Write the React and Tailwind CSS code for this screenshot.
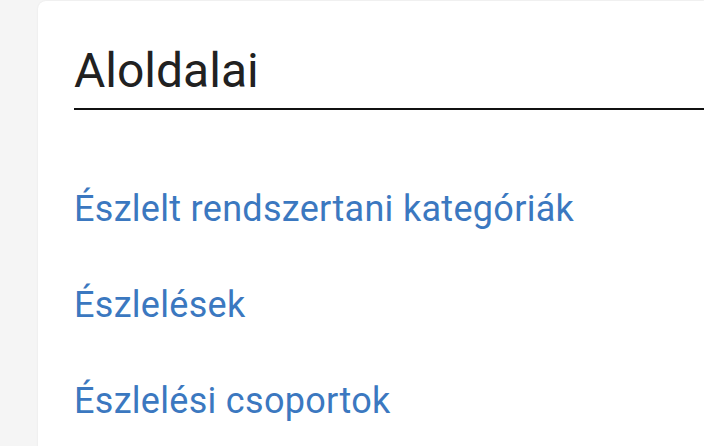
export default function App() {
  const links = [
    "Észlelt rendszertani kategóriák",
    "Észlelések",
    "Észlelési csoportok",
  ];
  return (
    <div className="h-[446px] w-[704px] overflow-hidden bg-[#f5f5f5] pl-[38px] pt-px" style={{ fontFamily: "Roboto, sans-serif" }}>
      <div className="h-[460px] rounded-tl-lg bg-white pl-[36px] shadow-[0_0_2px_rgba(0,0,0,0.08)]">
        <h2 className="border-b-2 border-[#111] pt-[42px] pb-[9px] text-[48px] font-normal leading-[56px] text-[#212121]">
          Aloldalai
        </h2>
        <ul className="flex flex-col gap-[47px] pt-[78px]">
          {links.map((t) => (
            <li key={t} className="leading-[42px]">
              <a href="#" className="text-[36px] leading-[42px] tracking-[0.3px] text-[#3b78c0]">
                {t}
              </a>
            </li>
          ))}
        </ul>
      </div>
    </div>
  );
}
